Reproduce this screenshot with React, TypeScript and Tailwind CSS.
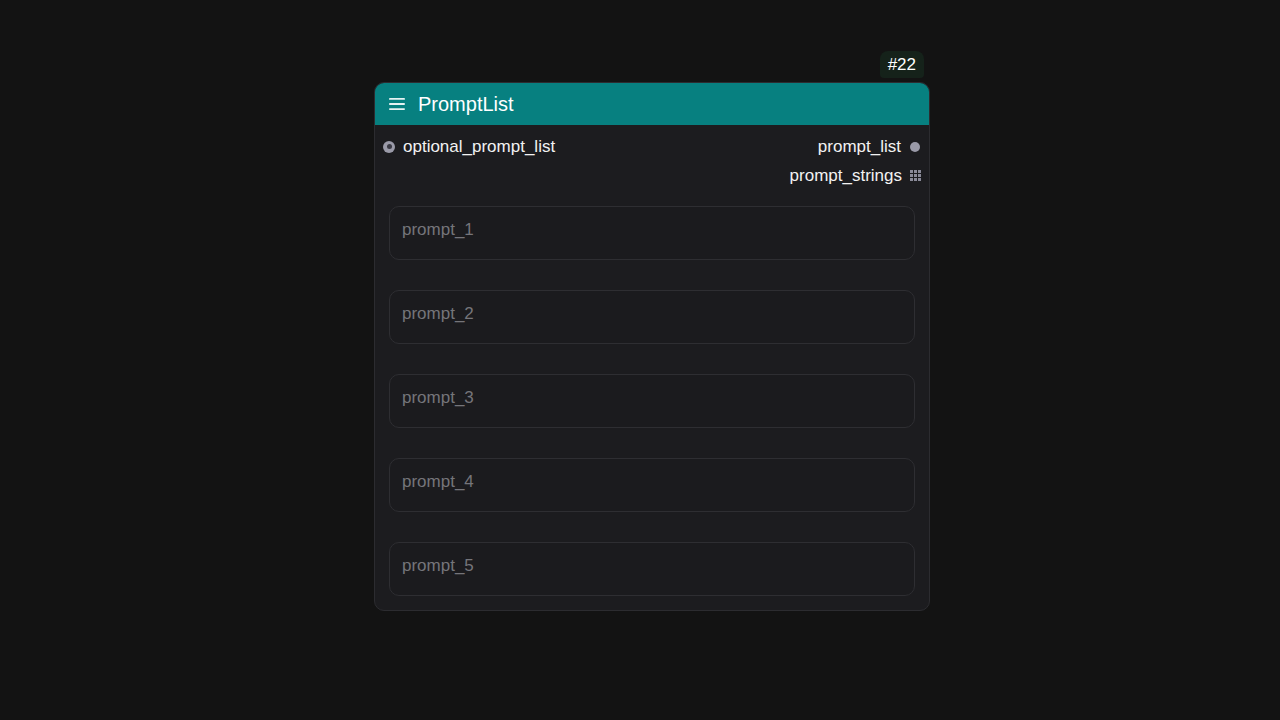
import React from 'react';

const prompts = ['prompt_1', 'prompt_2', 'prompt_3', 'prompt_4', 'prompt_5'];

function GridDots() {
  return (
    <svg width="11" height="11" viewBox="0 0 11 11" className="text-[#8a8a98]">
      {[0, 4, 8].map((y) =>
        [0, 4, 8].map((x) => (
          <rect key={`${x}-${y}`} x={x} y={y} width="3" height="3" fill="currentColor" />
        ))
      )}
    </svg>
  );
}

export default function App() {
  return (
    <div
      className="w-[1280px] h-[720px] bg-[#131313] flex"
      style={{ fontFamily: '"Liberation Sans", Arial, sans-serif' }}
    >
      <div className="mt-[51px] ml-[374px] w-[556px] flex flex-col">
        {/* Node id badge */}
        <div className="flex justify-end pr-[6px]">
          <div className="h-[27px] px-[8px] rounded-t-[8px] rounded-b-[4px] bg-[#15221a] text-white text-[17px] leading-[27px]">
            #22
          </div>
        </div>

        {/* Node */}
        <div className="mt-[4px] rounded-[10px] border border-[#2c2c30] bg-[#1c1c1f] overflow-hidden">
          {/* Header */}
          <div className="h-[42px] bg-[#078080] flex items-center pl-[14px] gap-[13px]">
            <svg width="16" height="14" viewBox="0 0 16 14" className="text-[#e6f3f3]">
              <rect x="0" y="1" width="16" height="1.8" rx="0.9" fill="currentColor" />
              <rect x="0" y="6.1" width="16" height="1.8" rx="0.9" fill="currentColor" />
              <rect x="0" y="11.2" width="16" height="1.8" rx="0.9" fill="currentColor" />
            </svg>
            <span className="text-white text-[20px]">PromptList</span>
          </div>

          {/* Body */}
          <div className="pt-[7px] pb-[14px] px-[14px] flex flex-col">
            <div className="h-[29px] flex items-center justify-between -mx-[6px]">
              <div className="flex items-center gap-[8px]">
                <span className="w-[12px] h-[12px] rounded-full bg-[#9a9aa8] flex items-center justify-center">
                  <span className="w-[5px] h-[5px] rounded-full bg-[#3a3a44]" />
                </span>
                <span className="text-[#f2f2f2] text-[17px]">optional_prompt_list</span>
              </div>
              <div className="flex items-center gap-[9px]">
                <span className="text-[#f2f2f2] text-[17px]">prompt_list</span>
                <span className="w-[10px] h-[10px] rounded-full bg-[#9a9aa8] mr-[1px]" />
              </div>
            </div>
            <div className="h-[29px] flex items-center justify-end -mx-[6px]">
              <div className="flex items-center gap-[8px]">
                <span className="text-[#f2f2f2] text-[17px]">prompt_strings</span>
                <GridDots />
              </div>
            </div>

            <div className="mt-[16px] flex flex-col gap-[30px]">
              {prompts.map((p) => (
                <div
                  key={p}
                  className="h-[54px] rounded-[10px] border border-[#2e2e32] bg-[#1b1b1e] px-[12px] pt-[10px] text-[#75757a] text-[17px]"
                >
                  {p}
                </div>
              ))}
            </div>
          </div>
        </div>
      </div>
    </div>
  );
}
